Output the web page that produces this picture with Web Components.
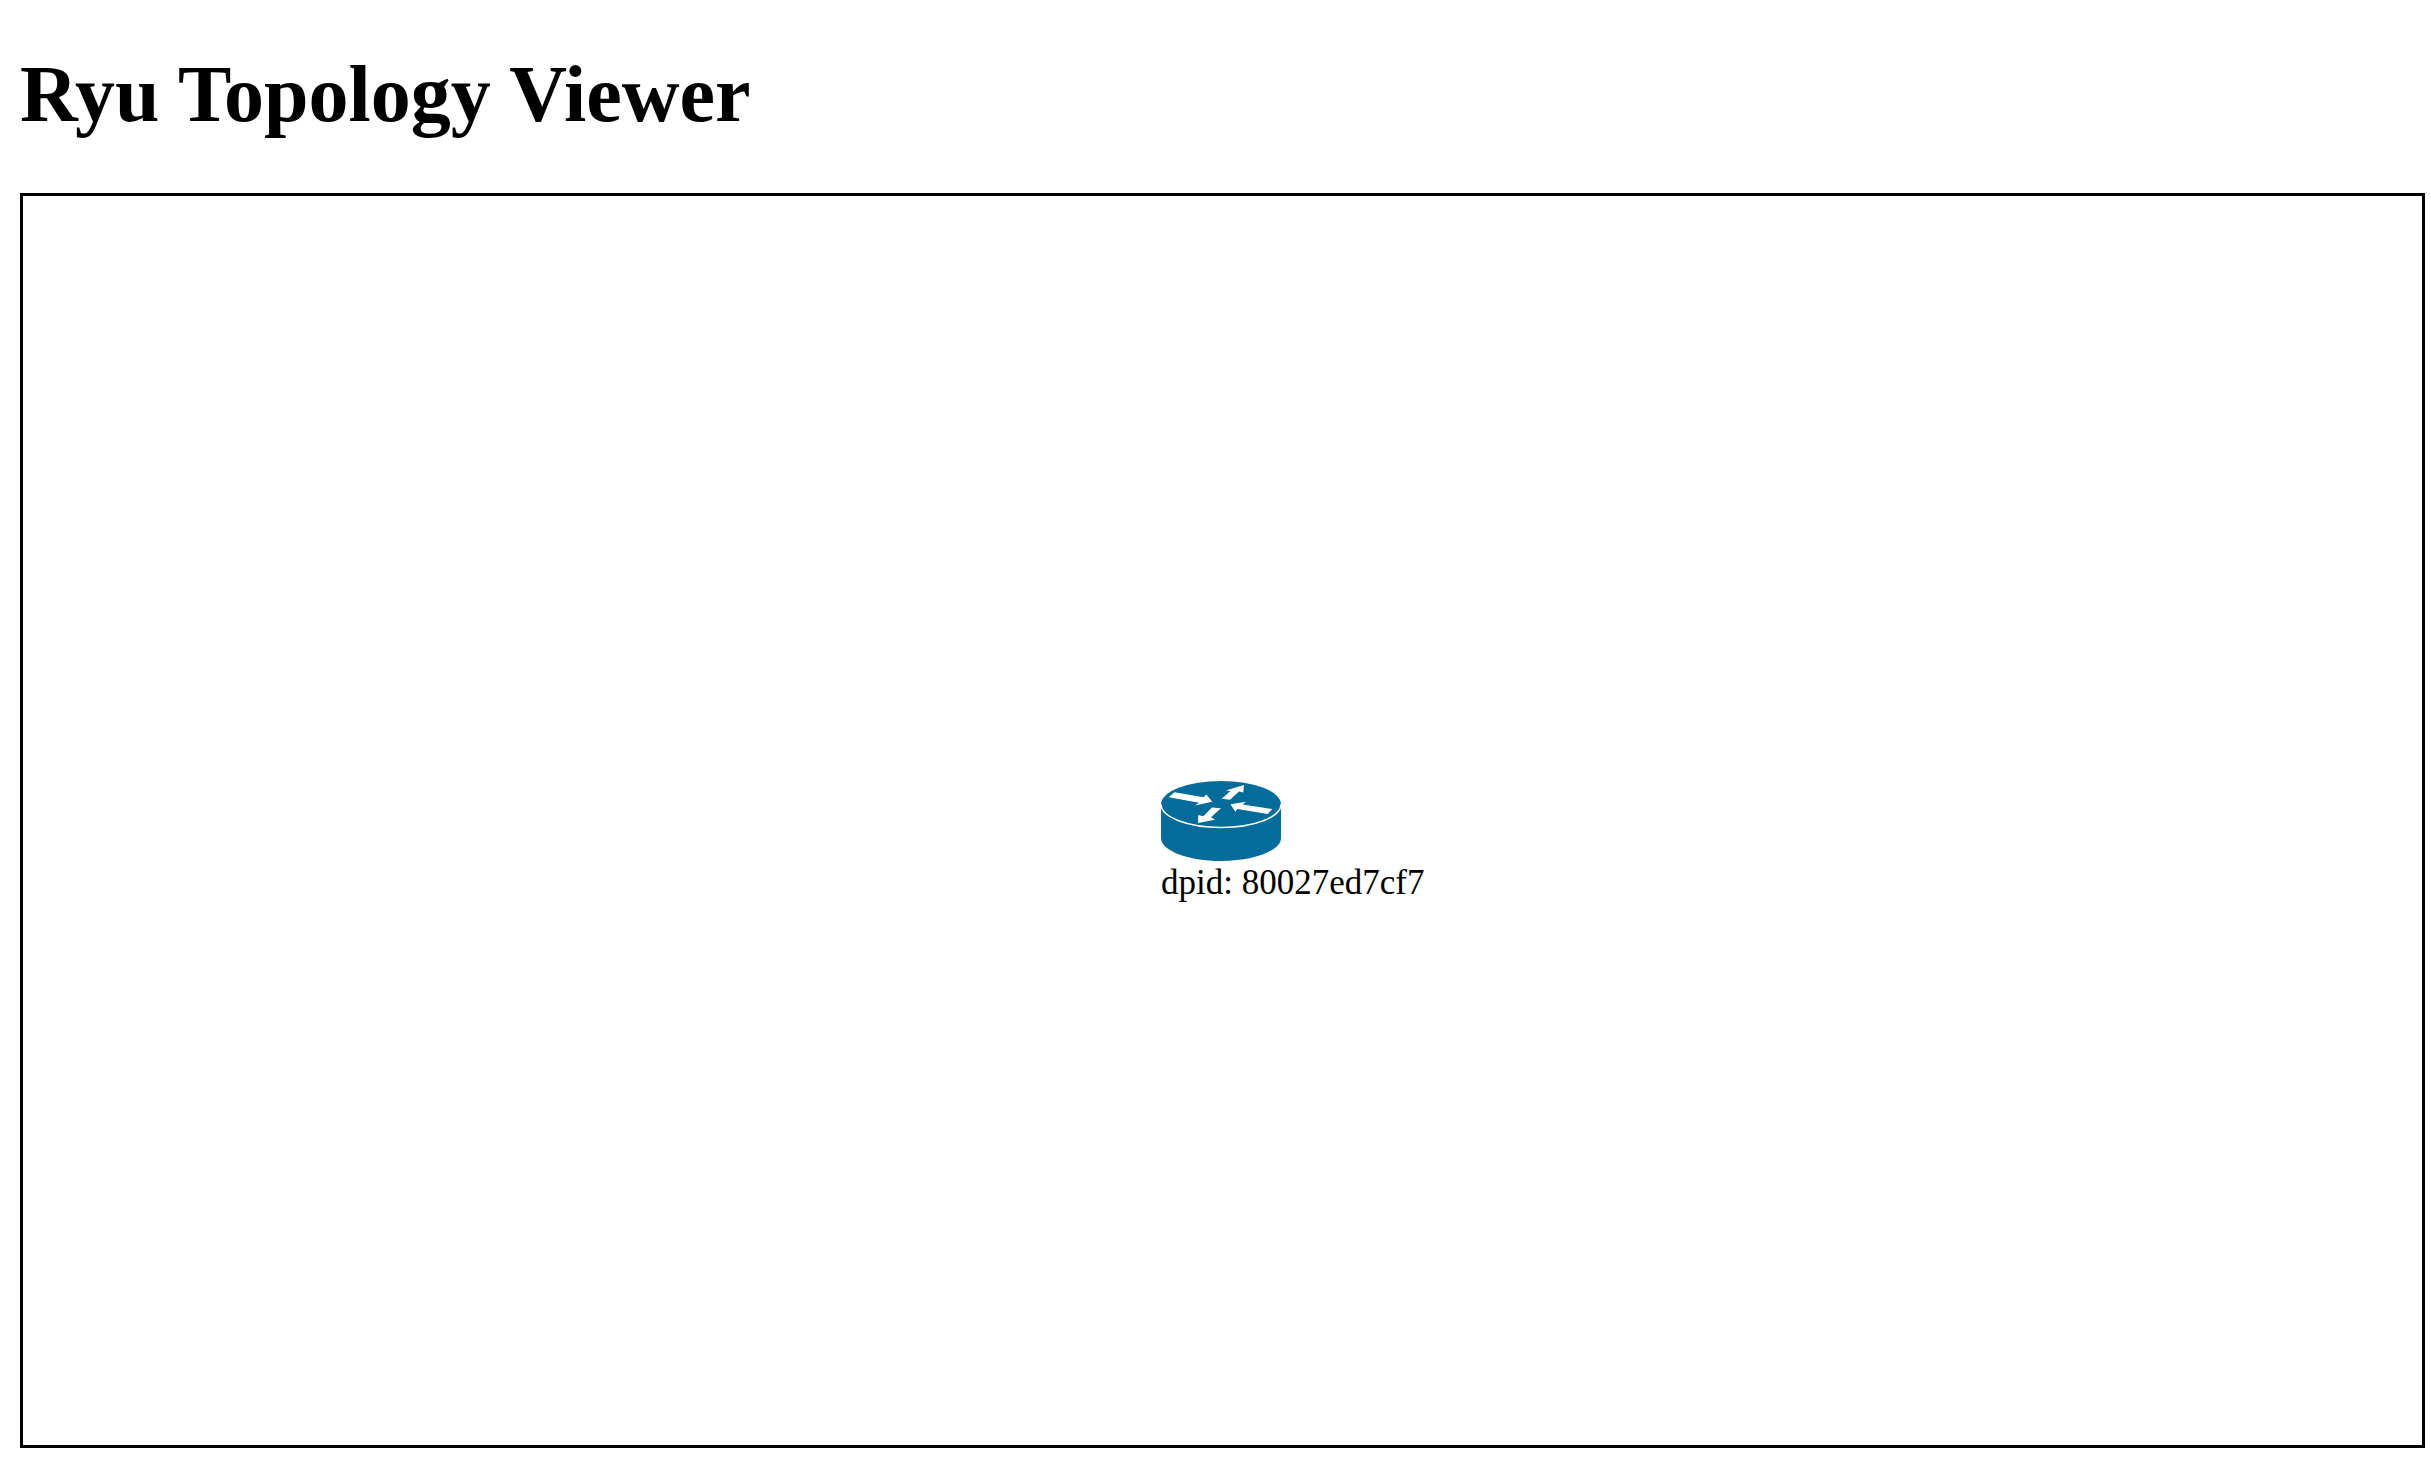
<!DOCTYPE html>
<html lang="en">
<head>
<meta charset="utf-8">
<title>Ryu Topology Viewer</title>
<style>
  body { margin: 0; background: #fff; color: #000; font-family: "Liberation Serif", "Times New Roman", serif; }
</style>
</head>
<body>
<topology-viewer>
  <span slot="title">Ryu Topology Viewer</span>
  <switch-node style="--x: 47.44%; --y: 46.85%">dpid: 80027ed7cf7</switch-node>
</topology-viewer>

<template id="viewer-template">
  <style>
    :host { display: flex; flex-direction: column; box-sizing: border-box; min-height: 100vh; padding: 48px 6px 19px 20px; }
    h1 { margin: 0 0 53px; font-size: 80px; line-height: 92px; font-weight: bold; }
    main { flex: 1; position: relative; border: 3px solid #000; }
  </style>
  <h1><slot name="title"></slot></h1>
  <main><slot></slot></main>
</template>

<template id="node-template">
  <style>
    :host { position: absolute; left: var(--x); top: var(--y); display: flex; flex-direction: column; font-size: 35px; line-height: 44px; white-space: nowrap; }
    svg { display: block; width: 120px; height: 80px; }
  </style>
  <svg viewBox="0 0 120 80" aria-hidden="true">
    <path fill="#036c9b" d="M0 23.3V57C0 69.7 26.9 80 60 80S120 69.7 120 57V23.3Z"/>
    <ellipse cx="60" cy="23.3" rx="60" ry="23.3" fill="#036c9b"/>
    <path fill="none" stroke="#fff" stroke-width="1.5" d="M0 23.3C0 36.2 26.9 46.4 60 46.4S120 36.2 120 23.3"/>
    <g fill="#fff">
      <path d="M7.7 16.3L13.3 11.2L42.5 16.3L45.3 13.4L51.3 20.8L34 24.4L38 21.8Z"/>
      <path d="M60.5 17.8L69.5 10L64.8 9.5L83 4L82.3 11.5L78 10.5L69 18.8Z"/>
      <path d="M111.3 28L106.7 33L76.5 28L74.3 30.8L69.5 23.3L85 20.8L81.5 23.5Z"/>
      <path d="M51 26.6L60 27.3L50 36.3L54 38.8L37 42L37.2 34L42.3 35.2Z"/>
    </g>
  </svg>
  <span><slot></slot></span>
</template>

<script>
  class TemplateElement extends HTMLElement {
    constructor() {
      super();
      const template = document.getElementById(this.constructor.templateId);
      this.attachShadow({ mode: "open" }).append(template.content.cloneNode(true));
    }
  }
  customElements.define("topology-viewer", class extends TemplateElement {
    static templateId = "viewer-template";
  });
  customElements.define("switch-node", class extends TemplateElement {
    static templateId = "node-template";
  });
</script>
</body>
</html>
